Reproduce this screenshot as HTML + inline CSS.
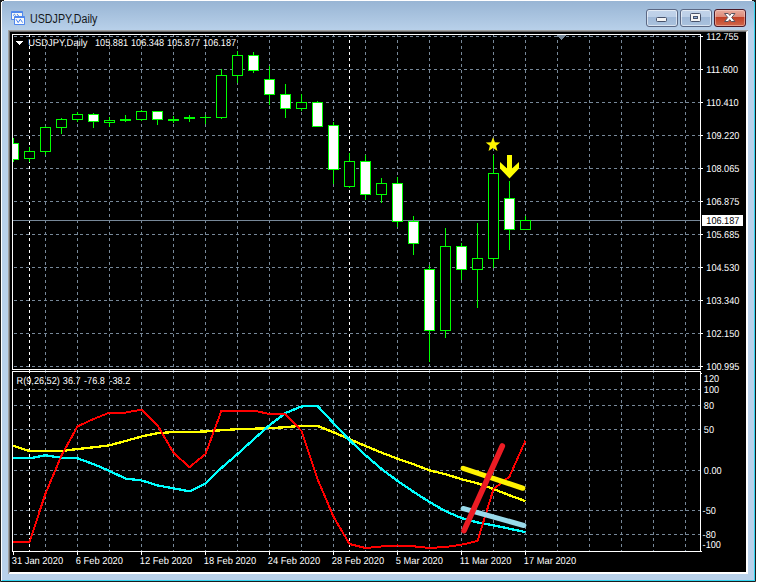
<!DOCTYPE html>
<html><head><meta charset="utf-8"><title>USDJPY,Daily</title>
<style>
html,body{margin:0;padding:0;background:#fff;}
body{width:757px;height:582px;position:relative;overflow:hidden;font-family:"Liberation Sans",Arial,sans-serif;}
#win{position:absolute;left:0;top:-1px;width:754px;height:581px;border:1px solid #1c1c1c;border-radius:3px 3px 0 0;background:#b9d1ea;overflow:hidden;}
#win .hl{position:absolute;left:0;top:0;right:0;bottom:0;border-top:1px solid #fff;border-left:1px solid #fff;border-right:1px solid #35d4f0;border-bottom:1px solid #35d4f0;border-radius:3px 3px 0 0;}
#cap{position:absolute;left:1px;top:1px;width:752px;height:30px;background:linear-gradient(#98b5d4,#b9d1ea);}
#title{position:absolute;left:30px;top:12px;font-size:12px;line-height:14px;color:#000;opacity:.88;white-space:nowrap;transform-origin:0 0;transform:scaleX(0.89);}
#sunk{position:absolute;left:8px;top:30px;width:736px;height:540px;border-top:2px solid #696969;border-left:2px solid #696969;border-right:2px solid #fff;border-bottom:2px solid #fff;background:#000;}
#sunk:before{content:"";position:absolute;left:-2px;top:-2px;right:-2px;height:1px;background:#a0a0a0;}
#sunk:after{content:"";position:absolute;left:-2px;top:-2px;bottom:-2px;width:1px;background:#a0a0a0;}
.btn{position:absolute;top:9px;height:16px;border:1px solid #5b6884;border-radius:3px;box-shadow:inset 0 0 0 1px rgba(255,255,255,.55);}
.btn.b{background:linear-gradient(#c1d3ea 0,#bccfe7 44%,#a0b9d8 45%,#aac2de 100%);}
.btn.c{border-color:#4b1a28;background:linear-gradient(#e9ab9d 0,#dc8a78 44%,#c13f25 45%,#d0684c 100%);box-shadow:inset 0 0 0 1px rgba(255,220,210,.45);}
</style></head><body>
<div id="win"><div id="cap"></div><div class="hl"></div></div>
<div class="btn b" style="left:646px;width:30px"></div>
<div class="btn b" style="left:680px;width:30px"></div>
<div class="btn c" style="left:714px;width:30px"></div>
<div id="title">USDJPY,Daily</div>
<div id="sunk"></div>
<svg width="757" height="582" viewBox="0 0 757 582" style="position:absolute;left:0;top:0">
<g shape-rendering="crispEdges" fill="none">
<line x1="14" x2="700" y1="36.5" y2="36.5" stroke="#778899" stroke-dasharray="3 3"/>
<line x1="14" x2="700" y1="69.5" y2="69.5" stroke="#778899" stroke-dasharray="3 3"/>
<line x1="14" x2="700" y1="102.5" y2="102.5" stroke="#778899" stroke-dasharray="3 3"/>
<line x1="14" x2="700" y1="135.5" y2="135.5" stroke="#778899" stroke-dasharray="3 3"/>
<line x1="14" x2="700" y1="168.5" y2="168.5" stroke="#778899" stroke-dasharray="3 3"/>
<line x1="14" x2="700" y1="201.5" y2="201.5" stroke="#778899" stroke-dasharray="3 3"/>
<line x1="14" x2="700" y1="234.5" y2="234.5" stroke="#778899" stroke-dasharray="3 3"/>
<line x1="14" x2="700" y1="267.5" y2="267.5" stroke="#778899" stroke-dasharray="3 3"/>
<line x1="14" x2="700" y1="300.5" y2="300.5" stroke="#778899" stroke-dasharray="3 3"/>
<line x1="14" x2="700" y1="333.5" y2="333.5" stroke="#778899" stroke-dasharray="3 3"/>
<line x1="14" x2="700" y1="366.5" y2="366.5" stroke="#778899" stroke-dasharray="3 3"/>
<line x1="14" x2="700" y1="389.5" y2="389.5" stroke="#778899" stroke-dasharray="3 3"/>
<line x1="14" x2="700" y1="405.5" y2="405.5" stroke="#778899" stroke-dasharray="3 3"/>
<line x1="14" x2="700" y1="429.5" y2="429.5" stroke="#778899" stroke-dasharray="3 3"/>
<line x1="14" x2="700" y1="470.5" y2="470.5" stroke="#778899" stroke-dasharray="3 3"/>
<line x1="14" x2="700" y1="510.5" y2="510.5" stroke="#778899" stroke-dasharray="3 3"/>
<line x1="14" x2="700" y1="534.5" y2="534.5" stroke="#778899" stroke-dasharray="3 3"/>
<line x1="45.5" x2="45.5" y1="34" y2="369" stroke="#778899" stroke-dasharray="3 3"/>
<line x1="45.5" x2="45.5" y1="370" y2="551" stroke="#778899" stroke-dasharray="3 3"/>
<line x1="77.5" x2="77.5" y1="34" y2="369" stroke="#778899" stroke-dasharray="3 3"/>
<line x1="77.5" x2="77.5" y1="370" y2="551" stroke="#778899" stroke-dasharray="3 3"/>
<line x1="109.5" x2="109.5" y1="34" y2="369" stroke="#778899" stroke-dasharray="3 3"/>
<line x1="109.5" x2="109.5" y1="370" y2="551" stroke="#778899" stroke-dasharray="3 3"/>
<line x1="141.5" x2="141.5" y1="34" y2="369" stroke="#778899" stroke-dasharray="3 3"/>
<line x1="141.5" x2="141.5" y1="370" y2="551" stroke="#778899" stroke-dasharray="3 3"/>
<line x1="173.5" x2="173.5" y1="34" y2="369" stroke="#778899" stroke-dasharray="3 3"/>
<line x1="173.5" x2="173.5" y1="370" y2="551" stroke="#778899" stroke-dasharray="3 3"/>
<line x1="205.5" x2="205.5" y1="34" y2="369" stroke="#778899" stroke-dasharray="3 3"/>
<line x1="205.5" x2="205.5" y1="370" y2="551" stroke="#778899" stroke-dasharray="3 3"/>
<line x1="237.5" x2="237.5" y1="34" y2="369" stroke="#778899" stroke-dasharray="3 3"/>
<line x1="237.5" x2="237.5" y1="370" y2="551" stroke="#778899" stroke-dasharray="3 3"/>
<line x1="269.5" x2="269.5" y1="34" y2="369" stroke="#778899" stroke-dasharray="3 3"/>
<line x1="269.5" x2="269.5" y1="370" y2="551" stroke="#778899" stroke-dasharray="3 3"/>
<line x1="301.5" x2="301.5" y1="34" y2="369" stroke="#778899" stroke-dasharray="3 3"/>
<line x1="301.5" x2="301.5" y1="370" y2="551" stroke="#778899" stroke-dasharray="3 3"/>
<line x1="333.5" x2="333.5" y1="34" y2="369" stroke="#778899" stroke-dasharray="3 3"/>
<line x1="333.5" x2="333.5" y1="370" y2="551" stroke="#778899" stroke-dasharray="3 3"/>
<line x1="365.5" x2="365.5" y1="34" y2="369" stroke="#778899" stroke-dasharray="3 3"/>
<line x1="365.5" x2="365.5" y1="370" y2="551" stroke="#778899" stroke-dasharray="3 3"/>
<line x1="397.5" x2="397.5" y1="34" y2="369" stroke="#778899" stroke-dasharray="3 3"/>
<line x1="397.5" x2="397.5" y1="370" y2="551" stroke="#778899" stroke-dasharray="3 3"/>
<line x1="429.5" x2="429.5" y1="34" y2="369" stroke="#778899" stroke-dasharray="3 3"/>
<line x1="429.5" x2="429.5" y1="370" y2="551" stroke="#778899" stroke-dasharray="3 3"/>
<line x1="461.5" x2="461.5" y1="34" y2="369" stroke="#778899" stroke-dasharray="3 3"/>
<line x1="461.5" x2="461.5" y1="370" y2="551" stroke="#778899" stroke-dasharray="3 3"/>
<line x1="493.5" x2="493.5" y1="34" y2="369" stroke="#778899" stroke-dasharray="3 3"/>
<line x1="493.5" x2="493.5" y1="370" y2="551" stroke="#778899" stroke-dasharray="3 3"/>
<line x1="525.5" x2="525.5" y1="34" y2="369" stroke="#778899" stroke-dasharray="3 3"/>
<line x1="525.5" x2="525.5" y1="370" y2="551" stroke="#778899" stroke-dasharray="3 3"/>
<line x1="557.5" x2="557.5" y1="34" y2="369" stroke="#778899" stroke-dasharray="3 3"/>
<line x1="557.5" x2="557.5" y1="370" y2="551" stroke="#778899" stroke-dasharray="3 3"/>
<line x1="589.5" x2="589.5" y1="34" y2="369" stroke="#778899" stroke-dasharray="3 3"/>
<line x1="589.5" x2="589.5" y1="370" y2="551" stroke="#778899" stroke-dasharray="3 3"/>
<line x1="621.5" x2="621.5" y1="34" y2="369" stroke="#778899" stroke-dasharray="3 3"/>
<line x1="621.5" x2="621.5" y1="370" y2="551" stroke="#778899" stroke-dasharray="3 3"/>
<line x1="653.5" x2="653.5" y1="34" y2="369" stroke="#778899" stroke-dasharray="3 3"/>
<line x1="653.5" x2="653.5" y1="370" y2="551" stroke="#778899" stroke-dasharray="3 3"/>
<line x1="685.5" x2="685.5" y1="34" y2="369" stroke="#778899" stroke-dasharray="3 3"/>
<line x1="685.5" x2="685.5" y1="370" y2="551" stroke="#778899" stroke-dasharray="3 3"/>
<line x1="29.5" x2="29.5" y1="34" y2="369" stroke="#fff" stroke-dasharray="3 3"/>
<line x1="29.5" x2="29.5" y1="370" y2="551" stroke="#fff" stroke-dasharray="3 3"/>
<line x1="349.5" x2="349.5" y1="34" y2="369" stroke="#fff" stroke-dasharray="3 3"/>
<line x1="349.5" x2="349.5" y1="370" y2="551" stroke="#fff" stroke-dasharray="3 3"/>
<line x1="13" x2="700" y1="220.5" y2="220.5" stroke="#778899"/>
<path d="M557 35h9v1h-1v1h-1v1h-1v1h-1v1h-1v-1h-1v-1h-1v-1h-1v-1h-1z" fill="#778899"/>
<line x1="13.5" x2="13.5" y1="138" y2="162" stroke="#00ff00"/>
<rect x="12.5" y="143.5" width="6" height="16" fill="#fff" stroke="#00ff00"/>
<line x1="29.5" x2="29.5" y1="147" y2="162" stroke="#00ff00"/>
<rect x="24.5" y="151.5" width="10" height="7" fill="#000" stroke="#00ff00"/>
<line x1="45.5" x2="45.5" y1="126" y2="155" stroke="#00ff00"/>
<rect x="40.5" y="127.5" width="10" height="24" fill="#000" stroke="#00ff00"/>
<line x1="61.5" x2="61.5" y1="118" y2="134" stroke="#00ff00"/>
<rect x="56.5" y="119.5" width="10" height="8" fill="#000" stroke="#00ff00"/>
<line x1="77.5" x2="77.5" y1="112" y2="122" stroke="#00ff00"/>
<rect x="72.5" y="114.5" width="10" height="5" fill="#000" stroke="#00ff00"/>
<line x1="93.5" x2="93.5" y1="113" y2="128" stroke="#00ff00"/>
<rect x="88.5" y="114.5" width="10" height="7" fill="#fff" stroke="#00ff00"/>
<line x1="109.5" x2="109.5" y1="117" y2="127" stroke="#00ff00"/>
<rect x="104.5" y="120.5" width="10" height="2" fill="#000" stroke="#00ff00"/>
<line x1="125.5" x2="125.5" y1="115" y2="122" stroke="#00ff00"/>
<rect x="120" y="119" width="11" height="2" fill="#00ff00"/>
<line x1="141.5" x2="141.5" y1="110" y2="121" stroke="#00ff00"/>
<rect x="136.5" y="111.5" width="10" height="8" fill="#000" stroke="#00ff00"/>
<line x1="157.5" x2="157.5" y1="111" y2="125" stroke="#00ff00"/>
<rect x="152.5" y="111.5" width="10" height="8" fill="#fff" stroke="#00ff00"/>
<line x1="173.5" x2="173.5" y1="116" y2="123" stroke="#00ff00"/>
<rect x="168" y="119" width="11" height="2" fill="#00ff00"/>
<line x1="189.5" x2="189.5" y1="115" y2="122" stroke="#00ff00"/>
<rect x="184" y="117" width="11" height="2" fill="#00ff00"/>
<line x1="205.5" x2="205.5" y1="115" y2="124" stroke="#00ff00"/>
<rect x="200" y="117" width="11" height="1" fill="#00ff00"/>
<line x1="221.5" x2="221.5" y1="69" y2="119" stroke="#00ff00"/>
<rect x="216.5" y="75.5" width="10" height="42" fill="#000" stroke="#00ff00"/>
<line x1="237.5" x2="237.5" y1="51" y2="83" stroke="#00ff00"/>
<rect x="232.5" y="55.5" width="10" height="20" fill="#000" stroke="#00ff00"/>
<line x1="253.5" x2="253.5" y1="52" y2="73" stroke="#00ff00"/>
<rect x="248.5" y="55.5" width="10" height="15" fill="#fff" stroke="#00ff00"/>
<line x1="269.5" x2="269.5" y1="66" y2="105" stroke="#00ff00"/>
<rect x="264.5" y="79.5" width="10" height="15" fill="#fff" stroke="#00ff00"/>
<line x1="285.5" x2="285.5" y1="84" y2="118" stroke="#00ff00"/>
<rect x="280.5" y="94.5" width="10" height="14" fill="#fff" stroke="#00ff00"/>
<line x1="301.5" x2="301.5" y1="94" y2="111" stroke="#00ff00"/>
<rect x="296.5" y="102.5" width="10" height="6" fill="#000" stroke="#00ff00"/>
<line x1="317.5" x2="317.5" y1="101" y2="127" stroke="#00ff00"/>
<rect x="312.5" y="102.5" width="10" height="24" fill="#fff" stroke="#00ff00"/>
<line x1="333.5" x2="333.5" y1="122" y2="184" stroke="#00ff00"/>
<rect x="328.5" y="125.5" width="10" height="44" fill="#fff" stroke="#00ff00"/>
<line x1="349.5" x2="349.5" y1="153" y2="188" stroke="#00ff00"/>
<rect x="344.5" y="161.5" width="10" height="25" fill="#000" stroke="#00ff00"/>
<line x1="365.5" x2="365.5" y1="155" y2="200" stroke="#00ff00"/>
<rect x="360.5" y="161.5" width="10" height="33" fill="#fff" stroke="#00ff00"/>
<line x1="381.5" x2="381.5" y1="178" y2="203" stroke="#00ff00"/>
<rect x="376.5" y="183.5" width="10" height="11" fill="#000" stroke="#00ff00"/>
<line x1="397.5" x2="397.5" y1="177" y2="227" stroke="#00ff00"/>
<rect x="392.5" y="183.5" width="10" height="38" fill="#fff" stroke="#00ff00"/>
<line x1="413.5" x2="413.5" y1="216" y2="255" stroke="#00ff00"/>
<rect x="408.5" y="221.5" width="10" height="22" fill="#fff" stroke="#00ff00"/>
<line x1="429.5" x2="429.5" y1="265" y2="362" stroke="#00ff00"/>
<rect x="424.5" y="269.5" width="10" height="61" fill="#fff" stroke="#00ff00"/>
<line x1="445.5" x2="445.5" y1="228" y2="338" stroke="#00ff00"/>
<rect x="440.5" y="246.5" width="10" height="84" fill="#000" stroke="#00ff00"/>
<line x1="461.5" x2="461.5" y1="243" y2="280" stroke="#00ff00"/>
<rect x="456.5" y="246.5" width="10" height="23" fill="#fff" stroke="#00ff00"/>
<line x1="477.5" x2="477.5" y1="223" y2="308" stroke="#00ff00"/>
<rect x="472.5" y="258.5" width="10" height="11" fill="#000" stroke="#00ff00"/>
<line x1="493.5" x2="493.5" y1="155" y2="268" stroke="#00ff00"/>
<rect x="488.5" y="173.5" width="10" height="85" fill="#000" stroke="#00ff00"/>
<line x1="509.5" x2="509.5" y1="181" y2="250" stroke="#00ff00"/>
<rect x="504.5" y="198.5" width="10" height="31" fill="#fff" stroke="#00ff00"/>
<line x1="525.5" x2="525.5" y1="216" y2="230" stroke="#00ff00"/>
<rect x="520.5" y="220.5" width="10" height="9" fill="#000" stroke="#00ff00"/>
<rect x="12.5" y="34.5" width="688" height="335" stroke="#fff"/>
<rect x="12.5" y="371.5" width="688" height="180" stroke="#fff"/>
<rect x="701" y="36" width="2" height="1" fill="#fff"/>
<rect x="701" y="69" width="2" height="1" fill="#fff"/>
<rect x="701" y="102" width="2" height="1" fill="#fff"/>
<rect x="701" y="135" width="2" height="1" fill="#fff"/>
<rect x="701" y="168" width="2" height="1" fill="#fff"/>
<rect x="701" y="201" width="2" height="1" fill="#fff"/>
<rect x="701" y="234" width="2" height="1" fill="#fff"/>
<rect x="701" y="267" width="2" height="1" fill="#fff"/>
<rect x="701" y="300" width="2" height="1" fill="#fff"/>
<rect x="701" y="333" width="2" height="1" fill="#fff"/>
<rect x="701" y="366" width="2" height="1" fill="#fff"/>
<rect x="701" y="373" width="1" height="1" fill="#fff"/>
<rect x="701" y="551" width="1" height="1" fill="#fff"/>
<rect x="13" y="552" width="1" height="3" fill="#fff"/>
<rect x="77" y="552" width="1" height="3" fill="#fff"/>
<rect x="141" y="552" width="1" height="3" fill="#fff"/>
<rect x="205" y="552" width="1" height="3" fill="#fff"/>
<rect x="269" y="552" width="1" height="3" fill="#fff"/>
<rect x="333" y="552" width="1" height="3" fill="#fff"/>
<rect x="397" y="552" width="1" height="3" fill="#fff"/>
<rect x="461" y="552" width="1" height="3" fill="#fff"/>
<rect x="525" y="552" width="1" height="3" fill="#fff"/>
<rect x="702" y="215" width="41" height="11" fill="#fff"/>
<path d="M16 41h7v1h-1v1h-1v1h-1v1h-1v-1h-1v-1h-1v-1h-1z" fill="#fff"/>
<polyline points="13,445.8 29.5,451.0 45.5,451.0 61.5,451.0 77.5,449.0 93.5,447.3 109.5,445.3 125.5,441.0 141.5,436.5 157.5,433.2 173.5,432.0 189.5,432.0 205.5,431.5 221.5,430.2 237.5,429.2 253.5,428.7 269.5,428.2 285.5,427.2 301.5,425.7 317.5,425.9 333.5,432.3 349.5,439.2 365.5,446.0 381.5,452.6 397.5,458.7 413.5,464.2 429.5,470.4 445.5,474.2 461.5,479.2 477.5,483.3 493.5,489.0 509.5,495.3 525.5,501.1" stroke="#ffff00" stroke-width="2.3" stroke-linejoin="round"/>
<polyline points="13,458.3 29.5,458.3 45.5,455.3 61.5,457.8 77.5,458.3 93.5,464.1 109.5,470.9 125.5,478.6 141.5,480.4 157.5,485.4 173.5,488.4 189.5,491.29999999999995 205.5,483.4 221.5,467.9 237.5,454.0 253.5,439.5 269.5,425.2 285.5,413.1 301.5,406.4 317.5,405.9 333.5,423.2 349.5,440.09999999999997 365.5,455.2 381.5,469.0 397.5,480.9 413.5,491.8 429.5,502.0 445.5,511.2 461.5,518.1 477.5,522.4 493.5,525.4 509.5,528.7 525.5,532.2" stroke="#00ffff" stroke-width="2.3" stroke-linejoin="round"/>
<polyline points="13,542.0 29.5,542.0 45.5,493.5 61.5,455.5 77.5,426.4 93.5,419.0 109.5,412.6 125.5,412.6 141.5,409.6 157.5,425.2 173.5,452.8 189.5,467.1 205.5,454.0 221.5,410.6 237.5,410.6 253.5,410.6 269.5,414 285.5,414.2 301.5,431.0 317.5,479.0 333.5,516.7 349.5,544.0 365.5,548.0 381.5,546.5 397.5,545.5 413.5,546.3 429.5,548.0 445.5,547.0 461.5,544.7 477.5,541.0 493.5,489.0 509.5,476.5 525.5,440.6" stroke="#ff0000" stroke-width="2" stroke-linejoin="round"/>
</g>
<g fill="none" stroke-linecap="round" stroke-width="5.2">
<line x1="463.2" y1="468.4" x2="522.8" y2="488.2" stroke="#fff200"/>
<line x1="463.2" y1="508.6" x2="523.8" y2="525.4" stroke="#99d9ea"/>
<line x1="464" y1="530.6" x2="502.3" y2="446" stroke="#ed1c24" stroke-width="5.6"/>
</g>
<polygon points="493.00,137.20 494.94,142.13 500.23,142.45 496.14,145.82 497.47,150.95 493.00,148.10 488.53,150.95 489.86,145.82 485.77,142.45 491.06,142.13" fill="#fff600"/>
<polygon points="507,155 512,155 512,168.5 519,162 519,168.6 509.5,178.4 500,168.6 500,162 507,168.5" fill="#ffff00"/>
<g font-family="Liberation Sans, Arial, sans-serif" font-size="10px" fill="#fff" text-rendering="geometricPrecision">
<text transform="translate(28.2,46) scale(0.938,1)">USDJPY,Daily</text>
<text transform="translate(95,46) scale(0.915,1)"><tspan x="0.00">105.881 </tspan><tspan x="39.34">106.348 </tspan><tspan x="78.69">105.877 </tspan><tspan x="118.03">106.187</tspan></text>
<text transform="translate(16.6,384) scale(0.915,1)"><tspan x="0.00">R(9,26,52) </tspan><tspan x="50.49">36.7 </tspan><tspan x="73.66">-76.8 </tspan><tspan x="101.42">-38.2</tspan></text>
<text transform="translate(706.3,40) scale(0.915,1)">112.755</text>
<text transform="translate(706.3,73) scale(0.915,1)">111.600</text>
<text transform="translate(706.3,106) scale(0.915,1)">110.410</text>
<text transform="translate(706.3,139) scale(0.915,1)">109.220</text>
<text transform="translate(706.3,172) scale(0.915,1)">108.065</text>
<text transform="translate(706.3,205) scale(0.915,1)">106.875</text>
<text transform="translate(706.3,238) scale(0.915,1)">105.685</text>
<text transform="translate(706.3,271) scale(0.915,1)">104.530</text>
<text transform="translate(706.3,304) scale(0.915,1)">103.340</text>
<text transform="translate(706.3,337) scale(0.915,1)">102.150</text>
<text transform="translate(706.3,370) scale(0.915,1)">100.995</text>
<text transform="translate(706.3,224) scale(0.915,1)" fill="#000">106.187</text>
<text transform="translate(703.8,382) scale(0.915,1)">120</text>
<text transform="translate(703.8,393) scale(0.915,1)">100</text>
<text transform="translate(703.8,409) scale(0.915,1)">80</text>
<text transform="translate(703.8,433) scale(0.915,1)">50</text>
<text transform="translate(703.8,474) scale(0.915,1)">0.00</text>
<text transform="translate(702.6,514) scale(0.915,1)">-50</text>
<text transform="translate(702.6,538) scale(0.915,1)">-80</text>
<text transform="translate(702.6,547.5) scale(0.915,1)">-100</text>
<text transform="translate(11.8,564) scale(0.932,1)">31 Jan 2020</text>
<text transform="translate(75.8,564) scale(0.932,1)">6 Feb 2020</text>
<text transform="translate(139.8,564) scale(0.932,1)">12 Feb 2020</text>
<text transform="translate(203.8,564) scale(0.932,1)">18 Feb 2020</text>
<text transform="translate(267.8,564) scale(0.932,1)">24 Feb 2020</text>
<text transform="translate(331.8,564) scale(0.932,1)">28 Feb 2020</text>
<text transform="translate(395.8,564) scale(0.932,1)">5 Mar 2020</text>
<text transform="translate(459.8,564) scale(0.932,1)">11 Mar 2020</text>
<text transform="translate(523.8,564) scale(0.932,1)">17 Mar 2020</text>
</g>
</svg>
<svg width="757" height="32" viewBox="0 0 757 32" style="position:absolute;left:0;top:0">
<path d="M0 0h4v1h-2v1h-1v1h-1zM756 0h-4v1h2v1h1v1h1z" fill="#1c1c1c" shape-rendering="crispEdges"/>
<!-- app icon -->
<g opacity="0.93">
<rect x="11" y="11" width="12" height="9" rx="0.8" fill="#4a84ee"/>
<rect x="12" y="13" width="10" height="6" fill="#fffef6"/>
<path d="M13 15.6l1.5-1.4l1 1.4M17 14l1.6 2" stroke="#3f7df0" stroke-width="1" fill="none"/>
<rect x="14" y="16" width="11" height="9" rx="0.8" fill="#4a84ee"/>
<rect x="15" y="18" width="9" height="6" fill="#fff"/>
<path d="M16 19.2L18.2 22.6L20.3 19.2L22.6 22.6" stroke="#3f7df0" stroke-width="1" fill="none"/>
</g>
<!-- min glyph -->
<rect x="656.5" y="17.5" width="10" height="4" rx="1" fill="#f4f4f4" stroke="#47526b"/>
<!-- max glyph -->
<rect x="690.5" y="13.5" width="10" height="8" rx="1" fill="#f4f4f4" stroke="#47526b"/>
<rect x="693.5" y="16.5" width="4" height="2" fill="#8fb0dc" stroke="#47526b"/>
<!-- close glyph -->
<polygon points="724.5,13.5 728.2,13.5 729.75,15.4 731.3,13.5 735,13.5 731.7,17.5 735,21.5 731.3,21.5 729.75,19.6 728.2,21.5 724.5,21.5 727.8,17.5" fill="#fff" stroke="#5b5560" stroke-width="1"/>
</svg>
</body></html>
